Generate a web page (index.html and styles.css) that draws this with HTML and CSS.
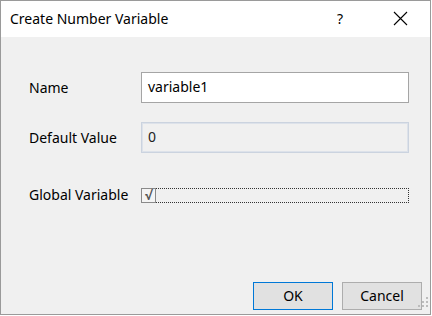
FILE: index.html
```html
<!DOCTYPE html>
<html lang="en">
<head>
  <meta charset="UTF-8" />
  <title>Create Number Variable</title>
  <link rel="stylesheet" href="styles.css">
</head>
<body>
  <div class="window">
    <!-- Title bar -->
    <div class="titlebar">
      <span class="title">Create Number Variable</span>
      <span class="help">?</span>
      <span class="close">
        <svg width="15" height="15" viewBox="0 0 15 15">
          <path d="M1 1 L14 14 M14 1 L1 14" stroke="#000" stroke-width="1.1" fill="none" />
        </svg>
      </span>
    </div>

    <div class="content">
      <div class="form-grid">
        <label class="label" for="name">Name</label>
        <div class="field">variable1</div>

        <label class="label">Default Value</label>
        <div class="field disabled">0</div>

        <label class="label check-label">Global Variable</label>
        <div class="check-row">
          <span class="checkbox">&#x221A;</span>
        </div>
      </div>

      <div class="buttons">
        <button class="btn default">OK</button>
        <button class="btn">Cancel</button>
        <span class="grip">
          <svg width="10" height="10" viewBox="0 0 10 10">
            <rect x="8" y="0" width="2" height="2" fill="#bcbcbc" />
            <rect x="4" y="4" width="2" height="2" fill="#bcbcbc" />
            <rect x="8" y="4" width="2" height="2" fill="#bcbcbc" />
            <rect x="0" y="8" width="2" height="2" fill="#bcbcbc" />
            <rect x="4" y="8" width="2" height="2" fill="#bcbcbc" />
            <rect x="8" y="8" width="2" height="2" fill="#bcbcbc" />
          </svg>
        </span>
      </div>
    </div>
  </div>
</body>
</html>
```

FILE: styles.css
```css
html, body {
  margin: 0;
  padding: 0;
  background: #ffffff;
  font-family: "Noto Sans", "Open Sans", sans-serif;
  font-size: 14px;
  color: #000;
}

.window {
  width: 429px;
  height: 313px;
  border: 1px solid #9a9a9a;
  background: #f0f0f0;
  display: flex;
  flex-direction: column;
}

.titlebar {
  height: 36px;
  background: #ffffff;
  display: flex;
  align-items: center;
  padding-left: 9px;
}

.title {
  flex: 1;
  font-size: 14px;
  padding-bottom: 2px;
}

.help {
  width: 20px;
  margin-right: 36px;
  font-size: 14px;
  padding-bottom: 2px;
}

.close {
  display: flex;
  margin-right: 22px;
  padding-bottom: 1px;
}

.content {
  flex: 1;
  display: flex;
  flex-direction: column;
  position: relative;
}

/* label + field rows */
.form-grid {
  display: grid;
  grid-template-columns: 112px 268px;
  grid-template-rows: 31px 31px 31px;
  row-gap: 19px;
  margin: 35px 0 0 28px;
  align-items: center;
}

.check-label {
  align-self: end;
  line-height: 15px;
  padding-bottom: 1px;
}

.field {
  box-sizing: border-box;
  height: 31px;
  border: 1px solid #a5a5a5;
  background: #ffffff;
  padding: 0 6px;
  display: flex;
  align-items: center;
  padding-bottom: 2px;
}

.field.disabled {
  background: #f0f0f0;
  border: 1px solid #cbd3df;
  box-shadow: inset 0 0 0 1px #dde2ea;
  color: #222;
}

.check-row {
  align-self: end;
  box-sizing: border-box;
  height: 15px;
  border: 1px dotted #333;
  display: flex;
  align-items: center;
}

.checkbox {
  box-sizing: border-box;
  width: 15px;
  height: 15px;
  margin: 0 0 0 -1px;
  border: 1px solid #8a8a8a;
  background: #f4f4f4;
  color: #555;
  font-size: 13px;
  font-weight: bold;
  line-height: 13px;
  text-align: center;
}

.buttons {
  margin-top: auto;
  display: flex;
  justify-content: flex-end;
  gap: 9px;
  padding: 0 8px 4px 0;
}

.btn {
  box-sizing: border-box;
  width: 80px;
  height: 28px;
  font-family: "Noto Sans", "Open Sans", sans-serif;
  font-size: 14px;
  background: #e1e1e1;
  border: 1px solid #adadad;
  color: #000;
  padding: 0 0 2px 0;
}

.btn.default {
  border: 1px solid #0078d7;
}

.grip {
  position: absolute;
  right: 2px;
  bottom: 7px;
  display: flex;
}
```
